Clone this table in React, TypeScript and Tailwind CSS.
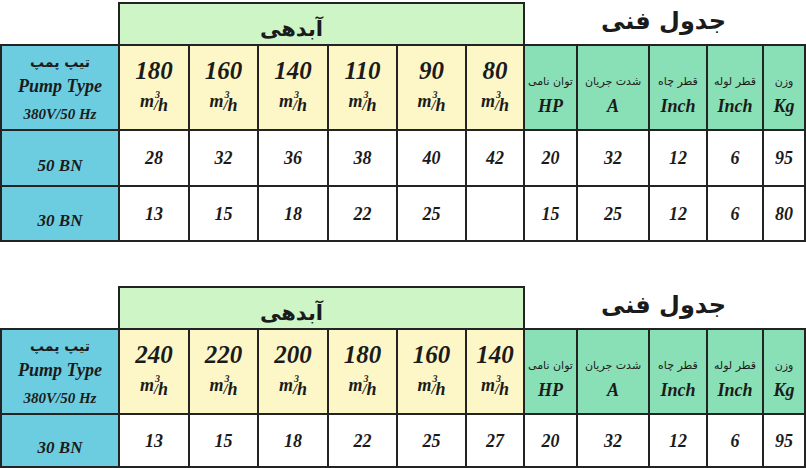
import * as React from "react";

const serif = "font-['Liberation_Serif',serif] font-bold italic";
const fa = "font-['DejaVu_Sans',sans-serif] font-bold";

type Row = { name: string; values: string[]; tech: string[] };

const TECH = [
  { fa: "توان نامی", en: "HP" },
  { fa: "شدت جریان", en: "A" },
  { fa: "قطر چاه", en: "Inch" },
  { fa: "قطر لوله", en: "Inch" },
  { fa: "وزن", en: "Kg" },
];

function Unit() {
  return (
    <span className={`${serif} inline-flex items-baseline text-[18px] leading-none text-[#1b1b1b]`}>
      <span>m</span>
      <span className="relative translate-y-[3px] text-[14px]">
        /
        <span className="absolute -top-[9px] left-[1px] text-[10px]">3</span>
      </span>
      <span className="translate-y-[4px]">h</span>
    </span>
  );
}

function SpecTable({ flows, rows, rowsClass }: { flows: string[]; rows: Row[]; rowsClass: string }) {
  return (
    <div>
      {/* caption strip: flow group on the left, title on the right */}
      <div className="flex h-[44px] pt-[2px]">
        <div className="w-[118px]" />
        <div className="flex h-[42px] w-[407px] items-center justify-center border-2 border-b-0 border-[#232323] bg-[#cdf5c6] pr-[60px] pt-[12px]">
          <span dir="rtl" className={`${fa} text-[21px] text-[#1b1b1b]`}>
            آبدهی
          </span>
        </div>
        <div className="flex flex-1 items-center justify-center pb-[4px] pr-[4px]">
          <span dir="rtl" className={`${fa} text-[24px] text-[#1b1b1b]`}>
            جدول فنی
          </span>
        </div>
      </div>

      <div
        className={`grid w-[806px] grid-cols-[116px_68px_67px_68px_67px_67px_56px_51px_70px_56px_54px_40px] gap-[2px] bg-[#232323] p-[2px] ${rowsClass}`}
      >
        <div className="flex flex-col items-center justify-center bg-[#6dcde0] pt-[2px] text-[#1b1b1b]">
          <span dir="rtl" className={`${fa} text-[14px] leading-none`}>
            تیپ پمپ
          </span>
          <span className={`${serif} mt-[8px] text-[18px] leading-none`}>Pump Type</span>
          <span className={`${serif} mt-[12px] text-[15px] leading-none`}>380V/50 Hz</span>
        </div>
        {flows.map((f) => (
          <div key={f} className="flex flex-col items-center justify-center bg-[#fdf7c8] pb-[4px] text-[#1b1b1b]">
            <span className={`${serif} text-[25px] leading-none`}>{f}</span>
            <span className="mt-[6px]">
              <Unit />
            </span>
          </div>
        ))}
        {TECH.map((t, i) => (
          <div key={i} className="flex flex-col items-center justify-center bg-[#8ae0b6] pt-[16px] text-[#1b1b1b]">
            <span dir="rtl" className={`${fa} whitespace-nowrap text-[11px] font-normal leading-none`}>
              {t.fa}
            </span>
            <span className={`${serif} mt-[10px] text-[18px] leading-none`}>{t.en}</span>
          </div>
        ))}

        {rows.map((r) => (
          <React.Fragment key={r.name}>
            <div className="flex items-center justify-center bg-[#6dcde0] pt-[14px]">
              <span className={`${serif} text-[17px] leading-none text-[#1b1b1b]`}>{r.name}</span>
            </div>
            {[...r.values, ...r.tech].map((v, i) => (
              <div key={i} className="flex items-center justify-center bg-white">
                <span className={`${serif} text-[18px] leading-none text-[#1b1b1b]`}>{v}</span>
              </div>
            ))}
          </React.Fragment>
        ))}
      </div>
    </div>
  );
}

export default function App() {
  return (
    <div className="h-[468px] w-[806px] overflow-hidden bg-white">
      <SpecTable
        flows={["180", "160", "140", "110", "90", "80"]}
        rowsClass="grid-rows-[83px_54px_53px]"
        rows={[
          { name: "50 BN", values: ["28", "32", "36", "38", "40", "42"], tech: ["20", "32", "12", "6", "95"] },
          { name: "30 BN", values: ["13", "15", "18", "22", "25", ""], tech: ["15", "25", "12", "6", "80"] },
        ]}
      />
      <div className="mt-[42px]">
        <SpecTable
          flows={["240", "220", "200", "180", "160", "140"]}
          rowsClass="grid-rows-[83px_51px]"
          rows={[
            { name: "30 BN", values: ["13", "15", "18", "22", "25", "27"], tech: ["20", "32", "12", "6", "95"] },
          ]}
        />
      </div>
    </div>
  );
}
